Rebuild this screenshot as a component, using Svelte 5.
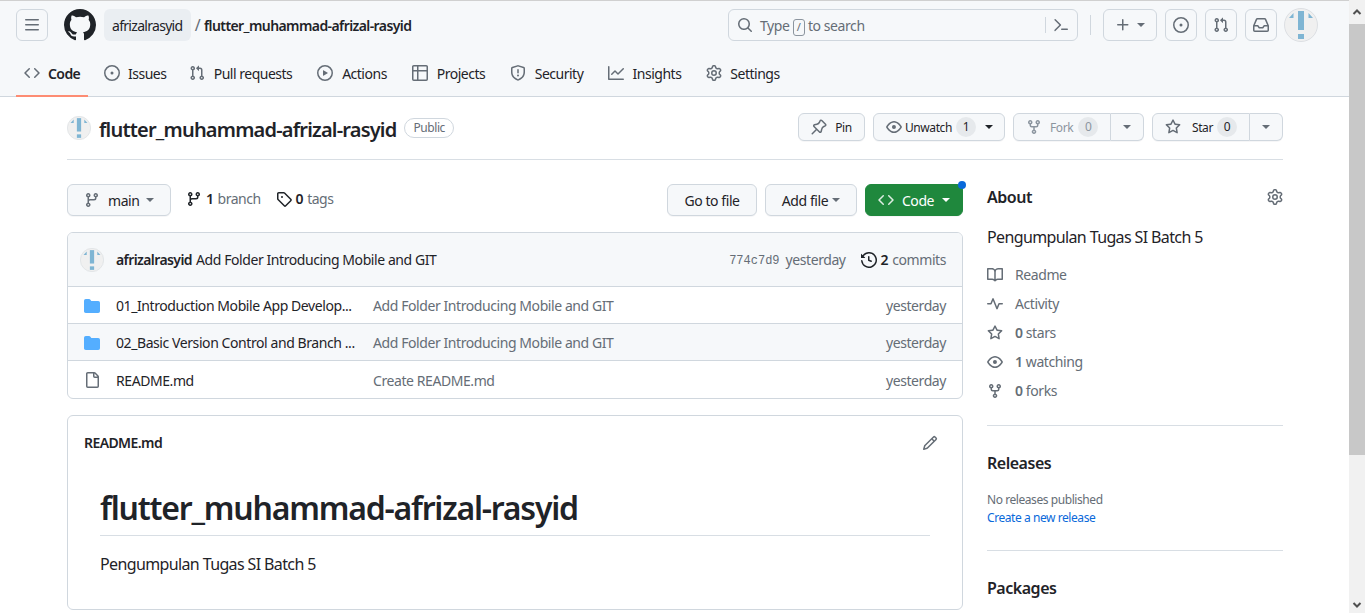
<script>
  const icons = {
    bars: 'M1 2.75A.75.75 0 0 1 1.75 2h12.5a.75.75 0 0 1 0 1.5H1.75A.75.75 0 0 1 1 2.75Zm0 5A.75.75 0 0 1 1.75 7h12.5a.75.75 0 0 1 0 1.5H1.75A.75.75 0 0 1 1 7.75ZM1.75 12h12.5a.75.75 0 0 1 0 1.5H1.75a.75.75 0 0 1 0-1.5Z',
    github: 'M8 0c4.42 0 8 3.58 8 8a8.013 8.013 0 0 1-5.45 7.59c-.4.08-.55-.17-.55-.38 0-.27.01-1.13.01-2.2 0-.75-.25-1.23-.54-1.48 1.78-.2 3.65-.88 3.65-3.95 0-.88-.31-1.59-.82-2.15.08-.2.36-1.02-.08-2.12 0 0-.67-.22-2.2.82-.64-.18-1.32-.27-2-.27-.68 0-1.36.09-2 .27-1.53-1.03-2.2-.82-2.2-.82-.44 1.1-.16 1.92-.08 2.12-.51.56-.82 1.28-.82 2.15 0 3.06 1.86 3.75 3.64 3.95-.23.2-.44.55-.51 1.07-.46.21-1.61.55-2.33-.66-.15-.24-.6-.83-1.23-.82-.67.01-.27.38.01.53.34.19.73.9.82 1.13.16.45.68 1.31 2.69.94 0 .67.01 1.3.01 1.49 0 .21-.15.45-.55.38A7.995 7.995 0 0 1 0 8c0-4.42 3.58-8 8-8Z',
    code: 'm11.28 3.22 4.25 4.25a.75.75 0 0 1 0 1.06l-4.25 4.25a.749.749 0 0 1-1.275-.326.749.749 0 0 1 .215-.734L13.94 8l-3.72-3.72a.749.749 0 0 1 .326-1.275.749.749 0 0 1 .734.215Zm-6.56 0a.751.751 0 0 1 1.042.018.751.751 0 0 1 .018 1.042L2.06 8l3.72 3.72a.749.749 0 0 1-.326 1.275.749.749 0 0 1-.734-.215L.47 8.53a.75.75 0 0 1 0-1.06Z',
    issue: 'M8 9.5a1.5 1.5 0 1 0 0-3 1.5 1.5 0 0 0 0 3ZM8 0a8 8 0 1 1 0 16A8 8 0 0 1 8 0ZM1.5 8a6.5 6.5 0 1 0 13 0 6.5 6.5 0 0 0-13 0Z',
    pr: 'M1.5 3.25a2.25 2.25 0 1 1 3 2.122v5.256a2.251 2.251 0 1 1-1.5 0V5.372A2.25 2.25 0 0 1 1.5 3.25Zm5.677-.177L9.573.677A.25.25 0 0 1 10 .854V2.5h1A2.5 2.5 0 0 1 13.5 5v5.628a2.251 2.251 0 1 1-1.5 0V5a1 1 0 0 0-1-1h-1v1.646a.25.25 0 0 1-.427.177L7.177 3.427a.25.25 0 0 1 0-.354ZM3.75 2.5a.75.75 0 1 0 0 1.5.75.75 0 0 0 0-1.5Zm0 9.5a.75.75 0 1 0 0 1.5.75.75 0 0 0 0-1.5Zm8.25.75a.75.75 0 1 0 1.5 0 .75.75 0 0 0-1.5 0Z',
    play: 'M8 0a8 8 0 1 1 0 16A8 8 0 0 1 8 0ZM1.5 8a6.5 6.5 0 1 0 13 0 6.5 6.5 0 0 0-13 0Zm4.879-2.773 4.264 2.559a.25.25 0 0 1 0 .428l-4.264 2.559A.25.25 0 0 1 6 10.559V5.442a.25.25 0 0 1 .379-.215Z',
    table: 'M0 1.75C0 .784.784 0 1.75 0h12.5C15.216 0 16 .784 16 1.75v12.5A1.75 1.75 0 0 1 14.25 16H1.75A1.75 1.75 0 0 1 0 14.25ZM6.5 6.5v8h7.75a.25.25 0 0 0 .25-.25V6.5Zm8-1.5V1.75a.25.25 0 0 0-.25-.25H6.5V5Zm-13 1.5v7.75c0 .138.112.25.25.25H5v-8ZM5 5V1.5H1.75a.25.25 0 0 0-.25.25V5Z',
    shield: 'M7.467.133a1.748 1.748 0 0 1 1.066 0l5.25 1.68A1.75 1.75 0 0 1 15 3.48V7c0 1.566-.32 3.182-1.303 4.682-.983 1.498-2.585 2.813-5.032 3.855a1.697 1.697 0 0 1-1.33 0c-2.447-1.042-4.049-2.357-5.032-3.855C1.32 10.182 1 8.566 1 7V3.48a1.75 1.75 0 0 1 1.217-1.667Zm.61 1.429a.25.25 0 0 0-.153 0l-5.25 1.68a.25.25 0 0 0-.174.238V7c0 1.358.275 2.666 1.057 3.86.784 1.194 2.121 2.34 4.366 3.297a.196.196 0 0 0 .154 0c2.245-.956 3.582-2.104 4.366-3.298C13.225 9.666 13.5 8.36 13.5 7V3.48a.251.251 0 0 0-.174-.237l-5.25-1.68ZM8.75 4.75v3a.75.75 0 0 1-1.5 0v-3a.75.75 0 0 1 1.5 0ZM9 10.5a1 1 0 1 1-2 0 1 1 0 0 1 2 0Z',
    graph: 'M1.5 1.75V13.5h13.75a.75.75 0 0 1 0 1.5H.75a.75.75 0 0 1-.75-.75V1.75a.75.75 0 0 1 1.5 0Zm14.28 2.53-5.25 5.25a.75.75 0 0 1-1.06 0L7 7.06 4.28 9.78a.751.751 0 0 1-1.042-.018.751.751 0 0 1-.018-1.042l3.25-3.25a.75.75 0 0 1 1.06 0L10 7.94l4.72-4.72a.751.751 0 0 1 1.042.018.751.751 0 0 1 .018 1.042Z',
    gear: 'M8 0a8.2 8.2 0 0 1 .701.031C9.444.095 9.99.645 10.16 1.29l.288 1.107c.018.066.079.158.212.224.231.114.454.243.668.386.123.082.233.09.299.071l1.103-.303c.644-.176 1.392.021 1.82.63.27.385.506.792.704 1.218.315.675.111 1.422-.364 1.891l-.814.806c-.049.048-.098.147-.088.294.016.257.016.515 0 .772-.01.147.038.246.088.294l.814.806c.475.469.679 1.216.364 1.891a7.977 7.977 0 0 1-.704 1.217c-.428.61-1.176.807-1.82.63l-1.102-.302c-.067-.019-.177-.011-.3.071a5.909 5.909 0 0 1-.668.386c-.133.066-.194.158-.211.224l-.29 1.106c-.168.646-.715 1.196-1.458 1.26a8.006 8.006 0 0 1-1.402 0c-.743-.064-1.289-.614-1.458-1.26l-.289-1.106c-.018-.066-.079-.158-.212-.224a5.738 5.738 0 0 1-.668-.386c-.123-.082-.233-.09-.299-.071l-1.103.303c-.644.176-1.392-.021-1.82-.63a8.12 8.12 0 0 1-.704-1.218c-.315-.675-.111-1.422.363-1.891l.815-.806c.05-.048.098-.147.088-.294a6.214 6.214 0 0 1 0-.772c.01-.147-.038-.246-.088-.294l-.815-.806C.635 6.045.431 5.298.746 4.623a7.92 7.92 0 0 1 .704-1.217c.428-.61 1.176-.807 1.82-.63l1.102.302c.067.019.177.011.3-.071.214-.143.437-.272.668-.386.133-.066.194-.158.211-.224l.29-1.106C6.009.645 6.556.095 7.299.03 7.53.01 7.764 0 8 0Zm-.571 1.525c-.036.003-.108.036-.137.146l-.289 1.105c-.147.561-.549.967-.998 1.189-.173.086-.34.183-.5.29-.417.278-.97.423-1.529.27l-1.103-.303c-.109-.03-.175.016-.195.045-.22.312-.412.644-.573.99-.014.031-.021.11.059.19l.815.806c.411.406.562.957.53 1.456a4.709 4.709 0 0 0 0 .582c.032.499-.119 1.05-.53 1.456l-.815.806c-.081.08-.073.159-.059.19.162.346.353.677.573.989.02.03.085.076.195.046l1.102-.303c.56-.153 1.113-.008 1.53.27.161.107.328.204.501.29.447.222.85.629.997 1.189l.289 1.105c.029.109.101.143.137.146a6.6 6.6 0 0 0 1.142 0c.036-.003.108-.036.137-.146l.289-1.105c.147-.561.549-.967.998-1.189.173-.086.34-.183.5-.29.417-.278.97-.423 1.529-.27l1.103.303c.109.029.175-.016.195-.045.22-.313.411-.644.573-.99.014-.031.021-.11-.059-.19l-.815-.806c-.411-.406-.562-.957-.53-1.456a4.709 4.709 0 0 0 0-.582c-.032-.499.119-1.05.53-1.456l.815-.806c.081-.08.073-.159.059-.19a6.464 6.464 0 0 0-.573-.989c-.02-.03-.085-.076-.195-.046l-1.102.303c-.56.153-1.113.008-1.53-.27a4.44 4.44 0 0 0-.501-.29c-.447-.222-.85-.629-.997-1.189l-.289-1.105c-.029-.11-.101-.143-.137-.146a6.6 6.6 0 0 0-1.142 0ZM11 8a3 3 0 1 1-6 0 3 3 0 0 1 6 0ZM9.5 8a1.5 1.5 0 1 0-3.001.001A1.5 1.5 0 0 0 9.5 8Z',
    search: 'M10.68 11.74a6 6 0 0 1-7.922-8.982 6 6 0 0 1 8.982 7.922l3.04 3.04a.749.749 0 0 1-.326 1.275.749.749 0 0 1-.734-.215ZM11.5 7a4.499 4.499 0 1 0-8.997 0A4.499 4.499 0 0 0 11.5 7Z',
    palette: 'm6.354 8.04-4.773 4.773a.75.75 0 1 0 1.061 1.06L7.945 8.57a.75.75 0 0 0 0-1.06L2.642 2.206a.75.75 0 0 0-1.06 1.061L6.353 8.04ZM8.75 11.5a.75.75 0 0 0 0 1.5h5.5a.75.75 0 0 0 0-1.5h-5.5Z',
    plus: 'M7.75 2a.75.75 0 0 1 .75.75V7h4.25a.75.75 0 0 1 0 1.5H8.5v4.25a.75.75 0 0 1-1.5 0V8.5H2.75a.75.75 0 0 1 0-1.5H7V2.75A.75.75 0 0 1 7.75 2Z',
    inbox: 'M2.8 2.06A1.75 1.75 0 0 1 4.41 1h7.18c.7 0 1.333.417 1.61 1.06l2.74 6.395c.04.093.06.194.06.295v4.5A1.75 1.75 0 0 1 14.25 15H1.75A1.75 1.75 0 0 1 0 13.25v-4.5c0-.101.02-.202.06-.295Zm1.61.44a.25.25 0 0 0-.23.152L1.887 8H4.75a.75.75 0 0 1 .6.3L6.625 10h2.75l1.275-1.7a.75.75 0 0 1 .6-.3h2.863L11.82 2.652a.25.25 0 0 0-.23-.152Zm10.09 7h-2.875l-1.275 1.7a.75.75 0 0 1-.6.3h-3.5a.75.75 0 0 1-.6-.3L4.375 9.5H1.5v3.75c0 .138.112.25.25.25h12.5a.25.25 0 0 0 .25-.25Z',
    pin: 'm11.294.984 3.722 3.722a1.75 1.75 0 0 1-.504 2.826l-1.327.613a3.089 3.089 0 0 0-1.707 2.084l-.584 2.454c-.317 1.332-1.972 1.8-2.94.832L5.75 11.311 1.78 15.28a.749.749 0 0 1-1.275-.326.749.749 0 0 1 .215-.734L4.69 10.25l-2.204-2.204c-.968-.968-.5-2.623.832-2.94l2.454-.584a3.08 3.08 0 0 0 2.084-1.707l.613-1.327a1.75 1.75 0 0 1 2.826-.504ZM6.283 9.723l2.732 2.731a.25.25 0 0 0 .42-.119l.584-2.454a4.586 4.586 0 0 1 2.537-3.098l1.328-.613a.25.25 0 0 0 .072-.404l-3.722-3.722a.25.25 0 0 0-.404.072l-.613 1.328a4.584 4.584 0 0 1-3.098 2.537l-2.454.584a.25.25 0 0 0-.119.42l2.731 2.732Z',
    eye: 'M8 2c1.981 0 3.671.992 4.933 2.078 1.27 1.091 2.187 2.345 2.637 3.023a1.62 1.62 0 0 1 0 1.798c-.45.678-1.367 1.932-2.637 3.023C11.67 13.008 9.981 14 8 14c-1.981 0-3.671-.992-4.933-2.078C1.797 10.83.88 9.576.43 8.898a1.62 1.62 0 0 1 0-1.798c.45-.677 1.367-1.931 2.637-3.022C4.33 2.992 6.019 2 8 2ZM1.679 7.932a.12.12 0 0 0 0 .136c.411.622 1.241 1.75 2.366 2.717C5.176 11.758 6.527 12.5 8 12.5c1.473 0 2.825-.742 3.955-1.715 1.124-.967 1.954-2.096 2.366-2.717a.12.12 0 0 0 0-.136c-.412-.621-1.242-1.75-2.366-2.717C10.824 4.242 9.473 3.5 8 3.5c-1.473 0-2.825.742-3.955 1.715-1.124.967-1.954 2.096-2.366 2.717ZM8 10a2 2 0 1 1-.001-3.999A2 2 0 0 1 8 10Z',
    fork: 'M5 5.372v.878c0 .414.336.75.75.75h4.5a.75.75 0 0 0 .75-.75v-.878a2.25 2.25 0 1 1 1.5 0v.878a2.25 2.25 0 0 1-2.25 2.25h-1.5v2.128a2.251 2.251 0 1 1-1.5 0V8.5h-1.5A2.25 2.25 0 0 1 3.5 6.25v-.878a2.25 2.25 0 1 1 1.5 0ZM5 3.25a.75.75 0 1 0-1.5 0 .75.75 0 0 0 1.5 0Zm6.75.75a.75.75 0 1 0 0-1.5.75.75 0 0 0 0 1.5Zm-3 8.75a.75.75 0 1 0-1.5 0 .75.75 0 0 0 1.5 0Z',
    star: 'M8 .25a.75.75 0 0 1 .673.418l1.882 3.815 4.21.612a.75.75 0 0 1 .416 1.279l-3.046 2.97.719 4.192a.751.751 0 0 1-1.088.791L8 12.347l-3.766 1.98a.75.75 0 0 1-1.088-.79l.72-4.194L.818 6.374a.75.75 0 0 1 .416-1.28l4.21-.611L7.327.668A.75.75 0 0 1 8 .25Zm0 2.445L6.615 5.5a.75.75 0 0 1-.564.41l-3.097.45 2.24 2.184a.75.75 0 0 1 .216.664l-.528 3.084 2.769-1.456a.75.75 0 0 1 .698 0l2.77 1.456-.53-3.084a.75.75 0 0 1 .216-.664l2.24-2.183-3.096-.45a.75.75 0 0 1-.564-.41L8 2.694Z',
    branch: 'M9.5 3.25a2.25 2.25 0 1 1 3 2.122V6A2.5 2.5 0 0 1 10 8.5H6a1 1 0 0 0-1 1v1.128a2.251 2.251 0 1 1-1.5 0V5.372a2.25 2.25 0 1 1 1.5 0v1.836A2.493 2.493 0 0 1 6 7h4a1 1 0 0 0 1-1v-.628A2.25 2.25 0 0 1 9.5 3.25Zm-6 0a.75.75 0 1 0 1.5 0 .75.75 0 0 0-1.5 0Zm8.25-.75a.75.75 0 1 0 0 1.5.75.75 0 0 0 0-1.5ZM4.25 12a.75.75 0 1 0 0 1.5.75.75 0 0 0 0-1.5Z',
    tag: 'M1 7.775V2.75C1 1.784 1.784 1 2.75 1h5.025c.464 0 .91.184 1.238.513l6.25 6.25a1.75 1.75 0 0 1 0 2.474l-5.026 5.026a1.75 1.75 0 0 1-2.474 0l-6.25-6.25A1.752 1.752 0 0 1 1 7.775Zm1.5 0c0 .066.026.13.073.177l6.25 6.25a.25.25 0 0 0 .354 0l5.025-5.025a.25.25 0 0 0 0-.354l-6.25-6.25a.25.25 0 0 0-.177-.073H2.75a.25.25 0 0 0-.25.25ZM6 5a1 1 0 1 1 0 2 1 1 0 0 1 0-2Z',
    history: 'm.427 1.927 1.215 1.215a8.002 8.002 0 1 1-1.6 5.685.75.75 0 1 1 1.493-.154 6.5 6.5 0 1 0 1.18-4.458l1.358 1.358A.25.25 0 0 1 3.896 6H.25A.25.25 0 0 1 0 5.75V2.104a.25.25 0 0 1 .427-.177ZM7.75 4a.75.75 0 0 1 .75.75v2.992l2.028.812a.75.75 0 0 1-.557 1.392l-2.5-1A.751.751 0 0 1 7 8.25v-3.5A.75.75 0 0 1 7.75 4Z',
    folder: 'M1.75 1A1.75 1.75 0 0 0 0 2.75v10.5C0 14.216.784 15 1.75 15h12.5A1.75 1.75 0 0 0 16 13.25v-8.5A1.75 1.75 0 0 0 14.25 3H7.5a.25.25 0 0 1-.2-.1l-.9-1.2C6.07 1.26 5.55 1 5 1H1.75Z',
    file: 'M2 1.75C2 .784 2.784 0 3.75 0h6.586c.464 0 .909.184 1.237.513l2.914 2.914c.329.328.513.773.513 1.237v9.586A1.75 1.75 0 0 1 13.25 16h-9.5A1.75 1.75 0 0 1 2 14.25Zm1.75-.25a.25.25 0 0 0-.25.25v12.5c0 .138.112.25.25.25h9.5a.25.25 0 0 0 .25-.25V6h-2.75A1.75 1.75 0 0 1 9 4.25V1.5Zm6.75.062V4.25c0 .138.112.25.25.25h2.688l-.011-.013-2.914-2.914-.013-.011Z',
    book: 'M0 1.75A.75.75 0 0 1 .75 1h4.253c1.227 0 2.317.59 3 1.501A3.743 3.743 0 0 1 11.006 1h4.245a.75.75 0 0 1 .75.75v10.5a.75.75 0 0 1-.75.75h-4.507a2.25 2.25 0 0 0-1.591.659l-.622.621a.75.75 0 0 1-1.06 0l-.622-.621A2.25 2.25 0 0 0 5.258 13H.75a.75.75 0 0 1-.75-.75Zm7.251 10.324.004-5.073-.002-2.253A2.25 2.25 0 0 0 5.003 2.5H1.5v9h3.757a3.75 3.75 0 0 1 1.994.574ZM8.755 4.75l-.004 7.322a3.752 3.752 0 0 1 1.992-.572H14.5v-9h-3.495a2.25 2.25 0 0 0-2.25 2.25Z',
    pulse: 'M6 2c.306 0 .582.187.696.471L10 10.731l1.304-3.26A.751.751 0 0 1 12 7h3.25a.75.75 0 0 1 0 1.5h-2.742l-1.812 4.528a.751.751 0 0 1-1.392 0L6 4.77 4.696 8.03A.75.75 0 0 1 4 8.5H.75a.75.75 0 0 1 0-1.5h2.742l1.812-4.529A.751.751 0 0 1 6 2Z',
    pencil: 'M11.013 1.427a1.75 1.75 0 0 1 2.474 0l1.086 1.086a1.75 1.75 0 0 1 0 2.474l-8.61 8.61c-.21.21-.47.364-.756.445l-3.251.93a.75.75 0 0 1-.927-.928l.929-3.25c.081-.286.235-.547.445-.758l8.61-8.61Zm.176 4.823L9.75 4.81l-6.286 6.287a.253.253 0 0 0-.064.108l-.558 1.953 1.953-.558a.253.253 0 0 0 .108-.064Zm1.238-3.763a.25.25 0 0 0-.354 0L10.811 3.75l1.439 1.44 1.263-1.263a.25.25 0 0 0 0-.354Z'
  }

  // w = label slot, github reserves the bold width of each tab label
  const tabs = [
    { label: 'Code', icon: 'code', w: 32, active: true },
    { label: 'Issues', icon: 'issue', w: 37 },
    { label: 'Pull requests', icon: 'pr', w: 80 },
    { label: 'Actions', icon: 'play', w: 47 },
    { label: 'Projects', icon: 'table', w: 50 },
    { label: 'Security', icon: 'shield', w: 50 },
    { label: 'Insights', icon: 'graph', w: 50 },
    { label: 'Settings', icon: 'gear', w: 50 }
  ]

  const files = [
    { name: '01_Introduction Mobile App Develop...', msg: 'Add Folder Introducing Mobile and GIT', icon: 'folder' },
    { name: '02_Basic Version Control and Branch ...', msg: 'Add Folder Introducing Mobile and GIT', icon: 'folder', shaded: true },
    { name: 'README.md', msg: 'Create README.md', icon: 'file' }
  ]

  const meta = [
    { icon: 'book', text: 'Readme' },
    { icon: 'pulse', text: 'Activity' },
    { icon: 'star', num: '0', text: 'stars' },
    { icon: 'eye', num: '1', text: 'watching' },
    { icon: 'fork', num: '0', text: 'forks' }
  ]
</script>

{#snippet icon(name, size = 16, cls = '')}
  <svg class="ic {cls}" width={size} height={size} viewBox="0 0 16 16" fill="currentColor"><path d={icons[name]} /></svg>
{/snippet}

{#snippet avatar(size)}
  <svg class="avatar" width={size} height={size} viewBox="0 0 34 34">
    <circle cx="17" cy="17" r="16.5" fill="#f0f0f0" stroke="#dcdfe3" />
    <g fill="#7fb5d3">
      <rect x="14" y="3" width="6" height="19" />
      <rect x="14" y="26" width="6" height="5" />
      <path d="M5 10 9.5 5v5ZM29 10l-4.500-5v5Z" />
    </g>
  </svg>
{/snippet}

<div class="page">
  <div class="main">
    <header>
      <div class="top">
        <button class="sq">{@render icon('bars')}</button>
        <span class="logo">{@render icon('github', 32)}</span>
        <span class="owner">afrizalrasyid</span>
        <span class="slash">/</span>
        <span class="repo-link">flutter_muhammad-afrizal-rasyid</span>
        <div class="search">
          {@render icon('search')}
          <span class="ph">Type <kbd>/</kbd> to search</span>
          <span class="palette">{@render icon('palette')}</span>
        </div>
        <span class="vsep"></span>
        <button class="plus">{@render icon('plus')}<i class="caret"></i></button>
        <button class="sq">{@render icon('issue')}</button>
        <button class="sq">{@render icon('pr')}</button>
        <button class="sq">{@render icon('inbox')}</button>
        <span class="top-av">{@render avatar(34)}</span>
      </div>
      <nav>
        {#each tabs as t}
          <span class="tab" class:active={t.active}>{@render icon(t.icon)}<span class="tab-label" style="width:{t.w}px">{t.label}</span></span>
        {/each}
      </nav>
    </header>

    <div class="content">
      <div class="repo-head">
        {@render avatar(24)}
        <h2>flutter_muhammad-afrizal-rasyid</h2>
        <span class="public">Public</span>
        <div class="actions">
          <button class="btn pin">{@render icon('pin')}<span>Pin</span></button>
          <button class="btn unwatch">{@render icon('eye')}<span>Unwatch</span><b class="count">1</b><i class="caret"></i></button>
          <div class="split fork">
            <button class="btn left muted">{@render icon('fork')}<span>Fork</span><b class="count">0</b></button>
            <button class="btn right"><i class="caret"></i></button>
          </div>
          <div class="split star">
            <button class="btn left">{@render icon('star')}<span>Star</span><b class="count">0</b></button>
            <button class="btn right"><i class="caret"></i></button>
          </div>
        </div>
      </div>

      <div class="layout">
        <div class="left-col">
          <div class="toolbar">
            <button class="btn main-btn">{@render icon('branch')}<span>main</span><i class="caret"></i></button>
            <span class="stat branches">{@render icon('branch')}<b>1</b> branch</span>
            <span class="stat tags">{@render icon('tag')}<b>0</b> tags</span>
            <span class="spacer"></span>
            <button class="btn tall goto">Go to file</button>
            <button class="btn tall add">Add file<i class="caret"></i></button>
            <button class="btn tall green">{@render icon('code')}<span>Code</span><i class="caret"></i><span class="dot"></span></button>
          </div>

          <div class="box files">
            <div class="commit">
              {@render avatar(24)}
              <span class="who">afrizalrasyid</span>
              <span class="cmsg">Add Folder Introducing Mobile and GIT</span>
              <span class="sha">774c7d9</span>
              <span class="when">yesterday</span>
              <span class="commits">{@render icon('history')}<b>2</b> commits</span>
            </div>
            {#each files as f}
              <div class="row" class:shaded={f.shaded}>
                <span class="row-ic {f.icon}">{@render icon(f.icon)}</span>
                <span class="fname">{f.name}</span>
                <span class="fmsg">{f.msg}</span>
                <span class="when">yesterday</span>
              </div>
            {/each}
          </div>

          <div class="box readme">
            <div class="readme-head">
              <span>README.md</span>
              {@render icon('pencil')}
            </div>
            <div class="md">
              <h1>flutter_muhammad-afrizal-rasyid</h1>
              <p>Pengumpulan Tugas SI Batch 5</p>
            </div>
          </div>
        </div>

        <aside>
          <div class="about-head"><h3>About</h3>{@render icon('gear')}</div>
          <p class="desc">Pengumpulan Tugas SI Batch 5</p>
          <ul>
            {#each meta as m}
              <li>{@render icon(m.icon)}<span>{#if m.num}<b>{m.num}</b>{' '}{/if}{m.text}</span></li>
            {/each}
          </ul>
          <div class="sec">
            <h3>Releases</h3>
            <div class="small">No releases published</div>
            <div class="small link">Create a new release</div>
          </div>
          <div class="sec pk">
            <h3>Packages</h3>
          </div>
        </aside>
      </div>
    </div>
  </div>

  <div class="scrollbar">
    <div class="sb-btn"><svg width="16" height="10" viewBox="0 0 16 10"><path d="M4.500 7 8 3.500 11.500 7" fill="none" stroke="#505050" stroke-width="2" /></svg></div>
    <div class="thumb"></div>
    <div class="track"></div>
    <div class="sb-btn end"><svg width="16" height="10" viewBox="0 0 16 10"><path d="M4.500 3 8 6.500 11.500 3" fill="none" stroke="#505050" stroke-width="2" /></svg></div>
  </div>
</div>

<style>
  :global(body) { margin: 0; background: #fff; }
  .page { display: flex; height: 613px; overflow: hidden; font-family: 'Noto Sans', 'Open Sans', sans-serif; font-size: 14px; color: #1f2328; letter-spacing: -.03em; }
  .main { flex: 1; min-width: 0; overflow: hidden; }
  button { font: inherit; letter-spacing: inherit; color: inherit; }
  .ic { display: block; flex-shrink: 0; }
  .avatar { display: block; flex-shrink: 0; }
  h1, h2, h3, p, ul { margin: 0; padding: 0; }
  b { font-weight: 600; }

  header { height: 95px; background: #f6f8fa; border-top: 1px solid #d0d0d0; border-bottom: 1px solid #d0d7de; }
  .top { display: flex; align-items: center; height: 32px; padding: 8px 31px 8px 16px; }
  .sq { width: 32px; height: 32px; padding: 0; background: transparent; border: 1px solid #d0d7de; border-radius: 6px; display: flex; align-items: center; justify-content: center; color: #656d76; margin-right: 8px; }
  .top > .sq:first-child { margin-right: 16px; }
  .logo { color: #1f2328; margin-right: 8px; }
  .owner { background: #eaeef2; border-radius: 6px; width: 87px; box-sizing: border-box; height: 32px; line-height: 33px; padding: 0 8px; letter-spacing: -.05em; white-space: nowrap; }
  .slash { color: #656d76; width: 13px; text-align: center; font-size: 16px; }
  .repo-link { font-weight: 600; margin-right: auto; letter-spacing: -.042em; padding-top: 1px; }
  .search { width: 350px; height: 32px; box-sizing: border-box; border: 1px solid #d0d7de; border-radius: 6px; display: flex; align-items: center; padding-left: 8px; color: #656d76; }
  .ph { margin-left: 7px; flex: 1; padding-top: 1px; }
  kbd { display: inline-block; font: inherit; font-size: 11px; border: 1px solid #8c959f; border-radius: 3px; width: 10px; height: 15px; line-height: 14px; text-align: center; }
  .palette { border-left: 1px solid #d0d7de; height: 16px; padding: 0 8px 0 7px; display: flex; align-items: center; }
  .vsep { width: 1px; height: 20px; background: #d0d7de; margin: 0 12px; }
  .plus { width: 54px; height: 32px; padding: 0; background: transparent; border: 1px solid #d0d7de; border-radius: 6px; display: flex; align-items: center; justify-content: center; gap: 6px; color: #656d76; margin-right: 8px; }
  .top-av { margin-left: -1px; }
  .caret { display: inline-block; width: 0; height: 0; border: 4px solid transparent; border-top-color: currentColor; border-bottom: 0; }

  nav { display: flex; gap: 8px; padding: 0 16px; height: 48px; align-items: stretch; letter-spacing: -.035em; }
  .tab { display: flex; align-items: center; gap: 8px; padding: 0 8px; box-sizing: border-box; height: 48px; }
  .tab .ic { color: #656d76; }
  .tab-label { text-align: center; white-space: nowrap; }
  .tab.active { box-shadow: inset 0 -2px 0 #fd8c73; font-weight: 600; letter-spacing: -.042em; }

  .content { padding: 0 0 0 67px; width: 1216px; }
  .repo-head { display: flex; align-items: center; height: 62px; border-bottom: 1px solid #d8dee4; }
  .repo-head h2 { font-size: 20px; font-weight: 600; margin: 4px 8px 0; line-height: 30px; letter-spacing: -.04em; }
  .public { border: 1px solid #d0d7de; border-radius: 10px; font-size: 12px; color: #656d76; height: 18px; line-height: 18px; padding: 0 8px; }
  .actions { margin-left: auto; margin-bottom: 2px; display: flex; gap: 8px; }
  .btn { height: 28px; box-sizing: border-box; background: #f6f8fa; border: 1px solid #d0d7de; border-radius: 6px; font-size: 12px; display: flex; align-items: center; padding: 0; box-shadow: 0 1px 0 rgba(31,35,40,.04); }
  .btn .ic { color: #656d76; }
  .pin { width: 67px; gap: 8px; justify-content: center; }
  .unwatch { width: 132px; padding-left: 12px; gap: 3px; }
  .count { font-weight: 400; background: #e6e9ec; border-radius: 10px; min-width: 20px; height: 20px; line-height: 20px; text-align: center; }
  .unwatch .count { margin: 0 6px 0 1px; }
  .split { display: flex; }
  .split .left { border-radius: 6px 0 0 6px; width: 98px; padding-left: 12px; gap: 8px; }
  .star .left { gap: 11px; }
  .split .right { border-radius: 0 6px 6px 0; border-left: 0; width: 33px; justify-content: center; color: #656d76; }
  .split .left .count { margin-left: -3px; }
  .star .left .count { margin-left: -7px; }
  .muted { color: #8c959f; }
  .muted .ic { color: #8c959f; }

  .layout { display: flex; gap: 24px; padding-top: 24px; }
  .left-col { width: 896px; flex-shrink: 0; }
  .toolbar { display: flex; align-items: center; height: 32px; }
  .tall { height: 32px; font-size: 14px; }
  .main-btn { width: 104px; height: 32px; font-size: 14px; padding-left: 16px; gap: 8px; }
  .main-btn .caret, .add .caret { color: #656d76; }
  .main-btn .caret { margin-left: -2px; }
  .stat { display: flex; align-items: center; color: #656d76; gap: 4px; margin-top: -3px; letter-spacing: -.035em; }
  .stat b { color: #1f2328; }
  .stat .ic { color: #1f2328; }
  .branches { margin-left: 15px; }
  .tags { margin-left: 15px; }
  .spacer { flex: 1; }
  .goto { width: 90px; justify-content: center; }
  .add { width: 92px; margin-left: 8px; justify-content: center; gap: 4px; }
  .green { width: 98px; margin-left: 8px; background: #1f883d; border-color: #1f883d; color: #fff; justify-content: center; gap: 8px; position: relative; }
  .green .ic { color: rgba(255,255,255,.85); }
  .dot { position: absolute; top: -4px; right: -4px; width: 8px; height: 8px; border-radius: 50%; background: #0969da; }

  .box { border: 1px solid #d0d7de; border-radius: 6px; }
  .files { margin-top: 16px; overflow: hidden; }
  .commit { display: flex; align-items: center; height: 53px; background: #f6f8fa; padding: 0 16px 0 12px; border-bottom: 1px solid #d0d7de; }
  .who { font-weight: 600; margin-left: 12px; letter-spacing: -.042em; }
  .cmsg { margin-left: 4px; flex: 1; }
  .sha { font-family: 'Liberation Mono', monospace; font-size: 12px; color: #656d76; letter-spacing: 0; margin-right: 6px; margin-top: 2px; }
  .when { color: #656d76; }
  .commits { display: flex; align-items: center; margin-left: 15px; color: #656d76; gap: 4px; }
  .commits .ic { color: #1f2328; }
  .commits b { color: #1f2328; }
  .row { display: flex; align-items: center; box-sizing: border-box; padding: 1px 16px 0; border-bottom: 1px solid #d0d7de; height: 37px; }
  .row:last-child { border-bottom: 0; }
  .row.shaded { background: #f6f8fa; }
  .row-ic { width: 32px; display: flex; }
  .folder { color: #54aeff; }
  .file { color: #656d76; }
  .fname { width: 257px; white-space: nowrap; overflow: hidden; }
  .fmsg { flex: 1; color: #656d76; }

  .readme { margin-top: 16px; height: 193px; }
  .readme-head { display: flex; justify-content: space-between; align-items: center; height: 54px; padding: 0 24px 0 16px; font-weight: 600; font-size: 14px; letter-spacing: -.042em; }
  .readme-head span { padding-bottom: 2px; }
  .readme-head .ic { color: #656d76; }
  .md { padding: 0 32px; }
  .md h1 { font-size: 32px; font-weight: 600; line-height: 40px; padding: 0 0 7px; margin-top: 18px; border-bottom: 1px solid #d8dee4; letter-spacing: -.038em; }
  .md p { font-size: 16px; margin-top: 16px; line-height: 24px; letter-spacing: -.039em; }

  aside { width: 296px; }
  .about-head { display: flex; justify-content: space-between; align-items: center; height: 26px; }
  .about-head .ic { color: #656d76; }
  h3 { font-size: 16px; font-weight: 600; line-height: 26px; letter-spacing: -.03em; }
  .desc { font-size: 16px; margin-top: 15px; line-height: 24px; letter-spacing: -.039em; }
  ul { list-style: none; margin-top: 11px; }
  li { display: flex; align-items: center; height: 29px; color: #656d76; gap: 12px; }
  li b { font-weight: 600; }
  .sec { border-top: 1px solid #d8dee4; margin-top: 20px; padding-top: 24px; }
  .small { font-size: 12px; color: #656d76; line-height: 18px; letter-spacing: -.036em; }
  h3 + .small { margin-top: 15px; }
  .link { color: #0969da; }
  .pk { margin-top: 23px; }

  .scrollbar { width: 16px; flex-shrink: 0; display: flex; flex-direction: column; background: #f1f1f1; }
  .sb-btn { height: 24px; display: flex; align-items: center; justify-content: center; }
  .sb-btn.end { height: 17px; }
  .thumb { height: 431px; background: #c8c8c8; }
  .track { flex: 1; }
</style>
